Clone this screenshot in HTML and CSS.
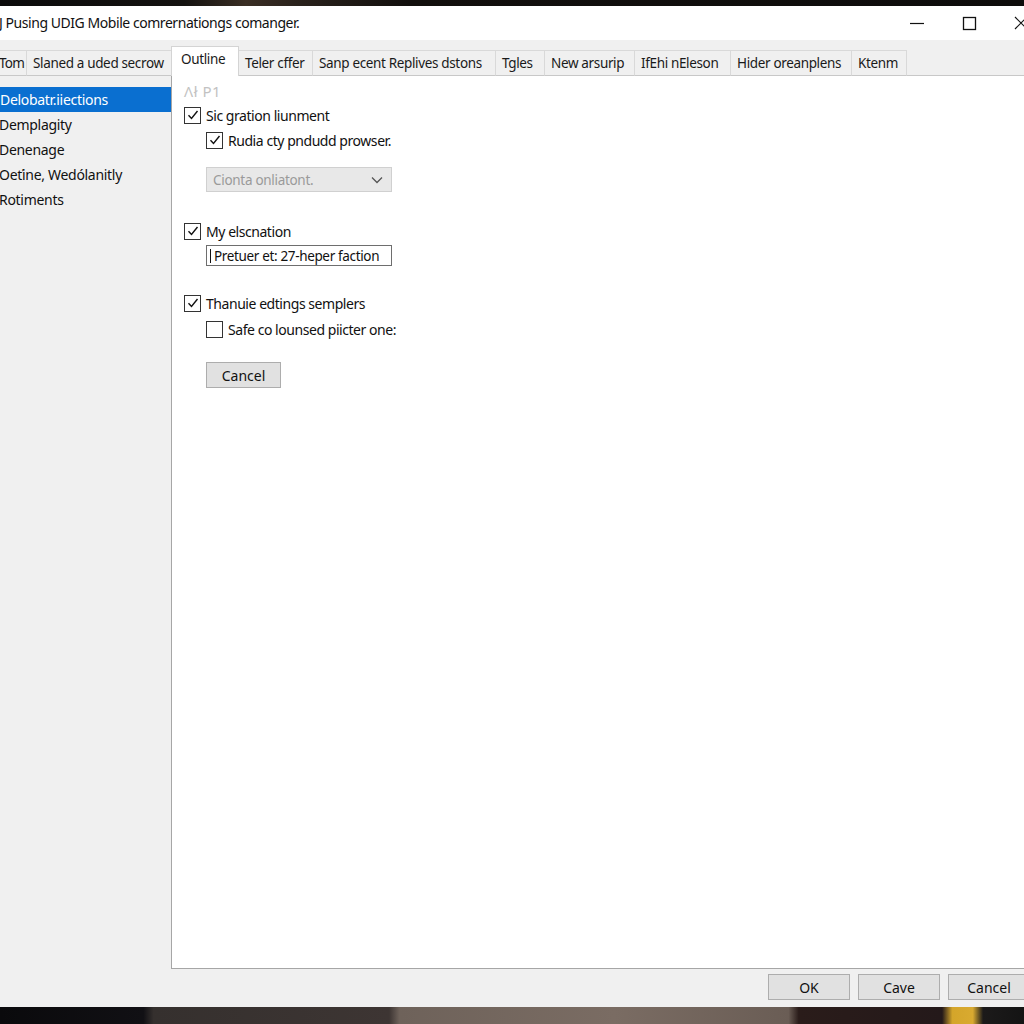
FILE: index.html
```html
<!DOCTYPE html>
<html>
<head>
<meta charset="utf-8">
<link rel="stylesheet" href="styles.css">
</head>
<body>
<div class="topstrip"></div>
<div class="titlebar">
  <div class="title">J Pusing UDIG Mobile comrernationgs comanger.</div>
  <div class="controls">
    <span class="ctl"><svg width="16" height="16" viewBox="0 0 16 16"><path d="M1 8.5h14" stroke="#111" stroke-width="1.2"/></svg></span>
    <span class="ctl"><svg width="16" height="16" viewBox="0 0 16 16"><rect x="2.5" y="2.5" width="12" height="12" fill="none" stroke="#111" stroke-width="1.3"/></svg></span>
    <span class="ctl"><svg width="16" height="16" viewBox="0 0 16 16"><path d="M2 2l12 12M14 2L2 14" stroke="#111" stroke-width="1.2"/></svg></span>
  </div>
</div>
<div class="tabbar">
  <div class="tab">Tom</div>
  <div class="tab">Slaned a uded secrow</div>
  <div class="tab active">Outline</div>
  <div class="tab">Teler cffer</div>
  <div class="tab">Sanp ecent Replives dstons</div>
  <div class="tab">Tgles</div>
  <div class="tab">New arsurip</div>
  <div class="tab">IfEhi nEleson</div>
  <div class="tab">Hider oreanplens</div>
  <div class="tab">Ktenm</div>
  <div class="tabfill"></div>
</div>
<div class="main">
  <div class="sidebar">
    <div class="item selected">Delobatr.iiections</div>
    <div class="item">Demplagity</div>
    <div class="item">Denenage</div>
    <div class="item">Oeťine, Wedólanitly</div>
    <div class="item">Rotiments</div>
  </div>
  <div class="panel">
    <div class="heading">Ʌł P1</div>
    <div class="row"><span class="cb checked"><svg width="14" height="14" viewBox="0 0 14 14"><path d="M2.5 7.2l3 3.2 6-7.4" fill="none" stroke="#111" stroke-width="1.4"/></svg></span><span class="lbl">Sic gration liunment</span></div>
    <div class="row sub"><span class="cb checked"><svg width="14" height="14" viewBox="0 0 14 14"><path d="M2.5 7.2l3 3.2 6-7.4" fill="none" stroke="#111" stroke-width="1.4"/></svg></span><span class="lbl">Rudia cty pndudd prowser.</span></div>
    <div class="select"><span>Cionta onliatont.</span><svg width="12" height="8" viewBox="0 0 12 8"><path d="M1 1.5l5 5 5-5" fill="none" stroke="#555" stroke-width="1.3"/></svg></div>
    <div class="row gap1"><span class="cb checked"><svg width="14" height="14" viewBox="0 0 14 14"><path d="M2.5 7.2l3 3.2 6-7.4" fill="none" stroke="#111" stroke-width="1.4"/></svg></span><span class="lbl">My elscnation</span></div>
    <div class="input"><span class="caret"></span>Pretuer et: 27-heper faction</div>
    <div class="row gap2"><span class="cb checked"><svg width="14" height="14" viewBox="0 0 14 14"><path d="M2.5 7.2l3 3.2 6-7.4" fill="none" stroke="#111" stroke-width="1.4"/></svg></span><span class="lbl">Thanuie edtings semplers</span></div>
    <div class="row sub gap3"><span class="cb"></span><span class="lbl">Safe co lounsed piicter one:</span></div>
    <div class="btn small">Cancel</div>
  </div>
</div>
<div class="footer">
  <div class="btn">OK</div>
  <div class="btn">Cave</div>
  <div class="btn">Cancel</div>
</div>
<div class="bottomstrip"></div>
</body>
</html>
```
FILE: styles.css
```css
html, body {
  margin: 0;
  padding: 0;
}
body {
  width: 1024px;
  height: 1024px;
  overflow: hidden;
  background: #f0f0f0;
  font-family: "Noto Sans", "Open Sans", sans-serif;
  font-size: 14px;
  color: #111;
  display: flex;
  flex-direction: column;
}
.topstrip {
  height: 6px;
  background: linear-gradient(90deg, #0b0b0b 0%, #141210 18%, #3a2e24 24%, #2a221c 29%, #120f0d 40%, #0d0c0b 100%);
  flex: none;
}
.titlebar {
  height: 34px;
  background: #ffffff;
  display: flex;
  align-items: center;
  justify-content: space-between;
  flex: none;
}
.title {
  font-size: 14px;
  margin-left: -1px;
  margin-top: -1px;
  letter-spacing: -0.45px;
}
.controls {
  display: flex;
  gap: 36px;
  margin-right: -5px;
}
.ctl {
  width: 16px;
  height: 16px;
  display: block;
}
.ctl svg { display: block; }
.tabbar {
  height: 36px;
  display: flex;
  align-items: flex-end;
  margin-left: -1px;
  flex: none;
}
.tab {
  height: 26px;
  line-height: 25px;
  padding: 0 6px;
  background: #f0f0f0;
  border: 1px solid #d9d9d9;
  border-bottom: 1px solid #c8c8c8;
  margin-left: -1px;
  white-space: nowrap;
  font-size: 13.5px;
  letter-spacing: -0.35px;
  color: #1a1a1a;
  box-sizing: border-box;
  margin-bottom: 0;
}
.tab:first-child {
  width: 28px;
  padding: 0;
  margin-left: 0;
  border-left: none;
  letter-spacing: -0.7px;
}
.tab:nth-child(2) { width: 146px; }
.tab:nth-child(4) { width: 75px; }
.tab:nth-child(5) { width: 184px; }
.tab:nth-child(6) { width: 50px; }
.tab:nth-child(7) { width: 91px; }
.tab:nth-child(8) { width: 97px; }
.tab:nth-child(9) { width: 122px; }
.tab:nth-child(10) { width: 56px; }
.tab.active {
  background: #ffffff;
  height: 30px;
  line-height: 24px;
  border-color: #d4d4d4;
  border-bottom: none;
  width: 68px;
  padding: 0 9px;
  position: relative;
  z-index: 1;
}
.tabfill {
  flex: 1;
  border-bottom: 1px solid #c8c8c8;
  height: 0;
}
.main {
  display: flex;
  height: 893px;
  flex: none;
}
.sidebar {
  width: 171px;
  flex: none;
  padding-top: 11px;
  box-sizing: border-box;
}
.item {
  height: 25px;
  line-height: 25px;
  padding-left: 0;
  margin-left: -1px;
  font-size: 14px;
  letter-spacing: -0.3px;
  white-space: nowrap;
  color: #111;
}
.item.selected {
  background: #0a6fd0;
  color: #ffffff;
  margin-left: 0;
}
.panel {
  flex: 1;
  background: #ffffff;
  border-left: 1px solid #a6a6a6;
  border-bottom: 1px solid #a6a6a6;
  padding-left: 12px;
  padding-top: 6px;
  box-sizing: border-box;
}
.heading {
  color: #c2c2c2;
  font-size: 15px;
  height: 18px;
  line-height: 18px;
  letter-spacing: 0.5px;
}
.row {
  display: flex;
  align-items: center;
  gap: 5px;
  height: 20px;
  margin-top: 5px;
}
.row.sub {
  margin-left: 22px;
}
.cb {
  width: 17px;
  height: 17px;
  border: 1px solid #333;
  box-sizing: border-box;
  background: #fff;
  display: flex;
  align-items: center;
  justify-content: center;
  flex: none;
}
.cb svg { display: block; }
.lbl {
  font-size: 14px;
  letter-spacing: -0.45px;
  white-space: nowrap;
}
.select {
  margin-left: 22px;
  margin-top: 17px;
  width: 186px;
  height: 25px;
  box-sizing: border-box;
  background: #e8e8e8;
  border: 1px solid #d0d0d0;
  display: flex;
  align-items: center;
  justify-content: space-between;
  padding: 0 8px 0 6px;
  color: #9a9a9a;
  font-size: 13.5px;
  letter-spacing: -0.3px;
}
.row.gap1 { margin-top: 29px; }
.input {
  margin-left: 22px;
  margin-top: 4px;
  width: 186px;
  height: 21px;
  box-sizing: border-box;
  border: 1px solid #6e6e6e;
  display: flex;
  align-items: center;
  padding-left: 3px;
  font-size: 13.5px;
  white-space: nowrap;
  letter-spacing: -0.35px;
}
.caret {
  width: 1px;
  height: 14px;
  background: #111;
  margin-right: 3px;
}
.row.gap2 { margin-top: 27px; }
.row.gap3 { margin-top: 6px; }
.btn {
  width: 82px;
  height: 26px;
  box-sizing: border-box;
  background: #e1e1e1;
  border: 1px solid #adadad;
  display: flex;
  align-items: center;
  justify-content: center;
  font-size: 14px;
  flex: none;
}
.btn.small {
  margin-left: 22px;
  margin-top: 23px;
  width: 75px;
}
.footer {
  height: 38px;
  display: flex;
  justify-content: flex-end;
  align-items: flex-start;
  gap: 8px;
  padding-top: 5px;
  margin-right: -6px;
  box-sizing: border-box;
  flex: none;
}
.bottomstrip {
  flex: 1;
  background: linear-gradient(90deg, #0a0a0c 0%, #111014 14%, #35302e 15%, #3d3533 38%, #6e625a 39%, #7a6c63 60%, #6a5d55 77%, #2a1c1a 78%, #24191a 92%, #d4a52a 93%, #d9aa30 95%, #1c1a1a 96%, #141414 100%);
}
```
